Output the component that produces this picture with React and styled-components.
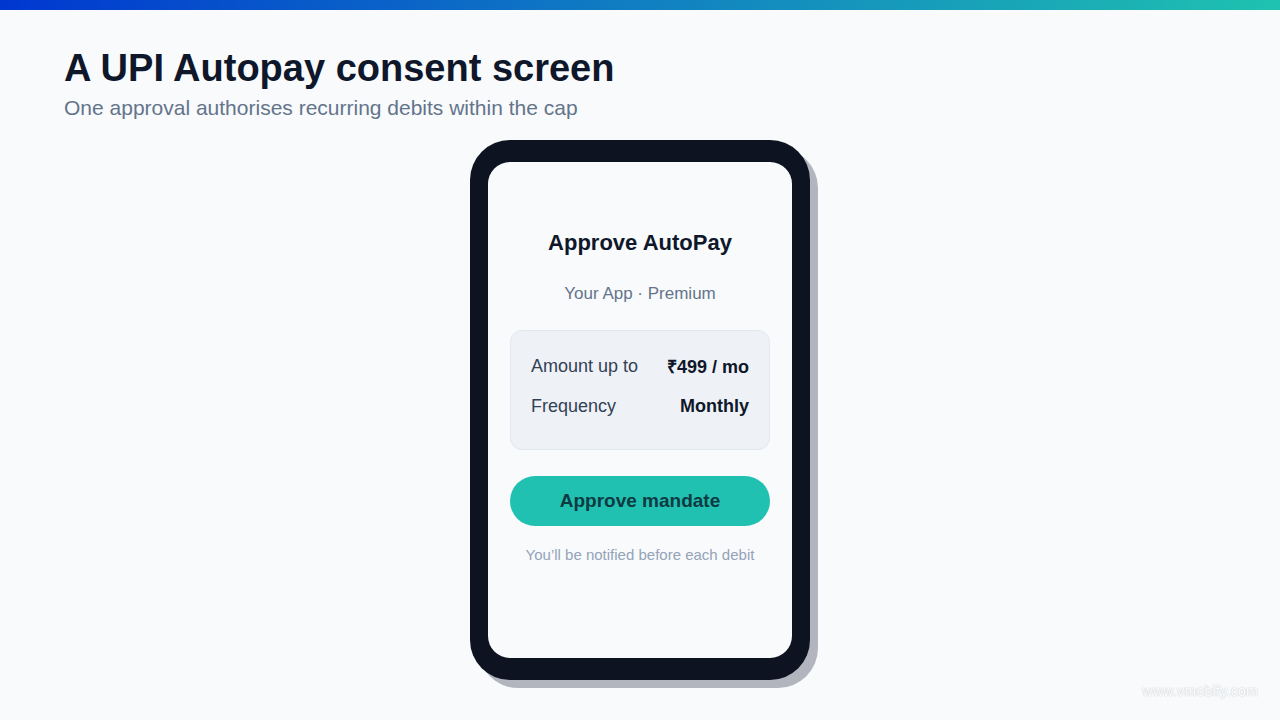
import React from "react";
import styled, { createGlobalStyle } from "styled-components";

const GlobalStyle = createGlobalStyle`
  html, body {
    margin: 0;
    padding: 0;
    background: #f8fafc;
  }
  body {
    font-family: "Liberation Sans", Arial, sans-serif;
  }
`;

const rows = [
  { label: "Amount up to", value: "₹499 / mo" },
  { label: "Frequency", value: "Monthly" }
];

export default function App() {
  return (
    <>
      <GlobalStyle />
      <Page>
        <TopBar />
        <Header>
          <Title>A UPI Autopay consent screen</Title>
          <Subtitle>One approval authorises recurring debits within the cap</Subtitle>
        </Header>
        <Stage>
          <Phone>
            <Screen>
              <ScreenTitle>Approve AutoPay</ScreenTitle>
              <Merchant>Your App · Premium</Merchant>
              <DetailCard>
                {rows.map((row) => (
                  <DetailRow key={row.label}>
                    <Label>{row.label}</Label>
                    <Value>{row.value}</Value>
                  </DetailRow>
                ))}
              </DetailCard>
              <ApproveButton>Approve mandate</ApproveButton>
              <Note>You’ll be notified before each debit</Note>
            </Screen>
          </Phone>
        </Stage>
        <Watermark>www.vmobify.com</Watermark>
      </Page>
    </>
  );
}

// Styled Components

const Page = styled.div`
  position: relative;
  width: 1280px;
  height: 720px;
  overflow: hidden;
  background: #f8fafc;
  display: flex;
  flex-direction: column;
`;

const TopBar = styled.div`
  height: 10px;
  background: linear-gradient(90deg, #0037d0 0%, #0f78c4 45%, #1fc2b0 100%);
`;

const Header = styled.header`
  padding: 35px 64px 0;
`;

const Title = styled.h1`
  margin: 0;
  font-size: 38px;
  line-height: 46px;
  font-weight: 700;
  color: #0f172a;
`;

const Subtitle = styled.p`
  margin: 4px 0 0;
  font-size: 21px;
  line-height: 26px;
  color: #64748b;
`;

const Stage = styled.main`
  display: flex;
  justify-content: center;
  padding-top: 19px;
`;

const Phone = styled.div`
  width: 340px;
  height: 540px;
  box-sizing: border-box;
  padding: 22px 18px;
  background: #0d1320;
  border-radius: 40px;
  box-shadow: 8px 8px 0 rgba(15, 23, 42, 0.3);
`;

const Screen = styled.div`
  height: 100%;
  box-sizing: border-box;
  background: #f8fafc;
  border-radius: 22px;
  padding: 68px 22px 0;
  display: flex;
  flex-direction: column;
  align-items: center;
`;

const ScreenTitle = styled.h2`
  margin: 0;
  font-size: 22px;
  line-height: 26px;
  font-weight: 700;
  color: #0f172a;
`;

const Merchant = styled.div`
  margin-top: 28px;
  font-size: 17px;
  line-height: 20px;
  color: #64748b;
`;

const DetailCard = styled.div`
  margin-top: 26px;
  width: 100%;
  box-sizing: border-box;
  padding: 23px 20px 31px;
  background: #eef2f7;
  border: 1px solid #e2e8f0;
  border-radius: 12px;
  display: flex;
  flex-direction: column;
  gap: 16px;
`;

const DetailRow = styled.div`
  display: flex;
  justify-content: space-between;
  align-items: center;
  height: 24px;
`;

const Label = styled.span`
  font-size: 18px;
  color: #334155;
`;

const Value = styled.span`
  font-size: 18px;
  font-weight: 700;
  color: #0f172a;
`;

const ApproveButton = styled.button`
  margin-top: 26px;
  width: 100%;
  height: 50px;
  border: none;
  border-radius: 25px;
  background: #20c1b1;
  color: #0f3a42;
  font-family: "Liberation Sans", Arial, sans-serif;
  font-size: 19px;
  font-weight: 700;
  cursor: pointer;
`;

const Note = styled.div`
  margin-top: 20px;
  font-size: 15px;
  line-height: 18px;
  color: #94a3b8;
`;

const Watermark = styled.div`
  position: absolute;
  right: 22px;
  bottom: 21px;
  font-size: 14px;
  color: #ffffff;
  text-shadow: 0 0 1px #c2c6cc, 0 0 2px #d4d7dc;
  letter-spacing: 0.3px;
`;
